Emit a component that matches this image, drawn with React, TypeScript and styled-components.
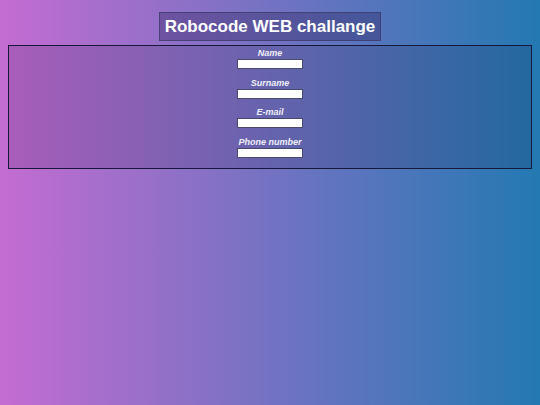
import * as React from 'react';
import styled, { createGlobalStyle } from 'styled-components';

const GlobalStyle = createGlobalStyle`
  html, body {
    margin: 0;
    padding: 0;
    height: 100%;
  }
  body {
    font-family: "Liberation Sans", Arial, sans-serif;
    background: linear-gradient(to right, #c46cd2, #2379b2);
    min-height: 405px;
  }
`;

const Page = styled.div`
  display: flex;
  flex-direction: column;
  align-items: center;
  padding: 12px 8px 0;
`;

const Title = styled.h1`
  margin: 0 0 4px;
  padding: 4px 5px 4px;
  font-size: 17px;
  line-height: 19px;
  font-weight: bold;
  color: #ffffff;
  background: rgba(40, 30, 90, 0.35);
  border: 1px solid rgba(60, 60, 110, 0.8);
`;

const Form = styled.form`
  align-self: stretch;
  display: flex;
  flex-direction: column;
  align-items: center;
  gap: 7.5px;
  padding: 1px 0 10px;
  background: rgba(20, 10, 50, 0.14);
  border: 1px solid #17173a;
`;

const Field = styled.div`
  display: flex;
  flex-direction: column;
  align-items: center;
`;

const Label = styled.label`
  font-size: 9px;
  line-height: 12px;
  font-weight: bold;
  font-style: italic;
  color: #eeeef6;
`;

const Input = styled.input`
  box-sizing: border-box;
  width: 66px;
  height: 10px;
  margin: 0;
  padding: 0;
  background: #ffffff;
  border: 1px solid #4a4a6a;
  outline: none;
`;

const fields = ['Name', 'Surname', 'E-mail', 'Phone number'];

export default function App() {
  return (
    <>
      <GlobalStyle />
      <Page>
        <Title>Robocode WEB challange</Title>
        <Form>
          {fields.map((f) => (
            <Field key={f}>
              <Label>{f}</Label>
              <Input type="text" />
            </Field>
          ))}
        </Form>
      </Page>
    </>
  );
}
